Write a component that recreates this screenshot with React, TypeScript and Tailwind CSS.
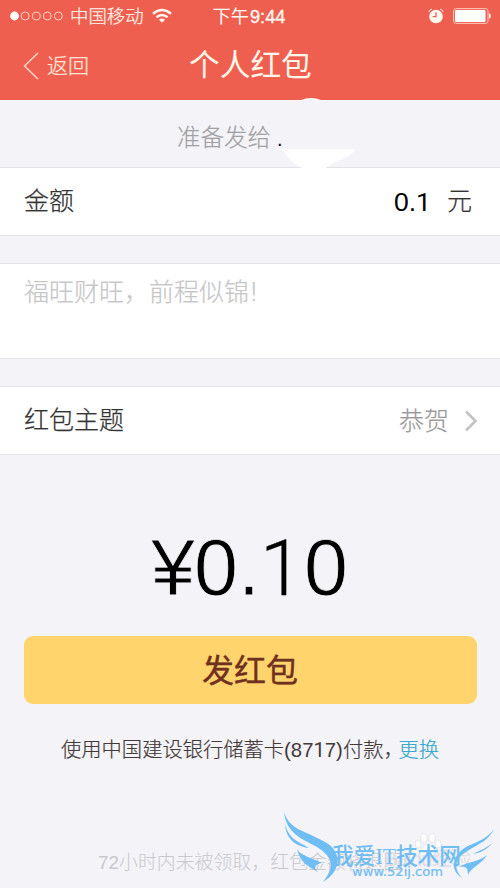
import type { ReactNode } from "react";

const cjk = "font-['Liberation_Sans','Noto_Sans_CJK_SC',sans-serif]";

function StatusBar() {
  return (
    <div className="flex h-8 items-center pl-[10px] pr-[9px] text-white">
      <svg width="54" height="12" viewBox="0 0 54 12" className="shrink-0">
        <circle cx="4.5" cy="6" r="4.4" fill="#fff" />
        {[15.2, 26.3, 37.3, 48.3].map((x) => (
          <circle key={x} cx={x} cy="6" r="4" fill="none" stroke="#ffd0c4" strokeWidth="1" />
        ))}
      </svg>
      <span className="ml-[6px] pt-px text-[18.4px] leading-8 font-light text-[#fff0e6] [-webkit-text-stroke:0.25px_#fff0e6]">中国移动</span>
      <svg width="20" height="16" viewBox="0 0 20 16" className="ml-2 shrink-0" fill="none" stroke="#fff8ee" strokeWidth="2.5">
        <path d="M1 5.8Q10-1.7 19 5.8" />
        <path d="M4.4 9.2Q10 4.7 15.6 9.2" />
        <path d="M7 11.7Q10 9.3 13 11.7L10 14.8Z" fill="#fff8ee" stroke="none" />
      </svg>
      <span className="ml-[41px] pt-px whitespace-nowrap text-[18.2px] leading-8 text-[#fff8f0]">
        下午<span className="ml-px [-webkit-text-stroke:0.35px_#fff8f0]">9:44</span>
      </span>
      <div className="ml-auto flex items-center gap-[9px]">
        <svg width="16" height="16" viewBox="0 0 16 16">
          <circle cx="8" cy="8.5" r="6.8" fill="#fff8f0" />
          <path d="M1 4Q1.5 1.5 4 1M12 1Q14.5 1.5 15 4" fill="none" stroke="#ffe5dc" strokeWidth="1.2" />
          <path d="M8 4.3V8.7H4.7" fill="none" stroke="#ef5f50" strokeWidth="1.3" />
        </svg>
        <svg width="38" height="16" viewBox="0 0 38 16">
          <rect x="0.6" y="0.6" width="34.4" height="14.8" rx="2.3" fill="none" stroke="#ffc9bd" />
          <rect x="2" y="2" width="30.5" height="12" rx="1" fill="#fff" />
          <path d="M36 5.2Q38 6 38 8T36 10.8Z" fill="#fff0e8" />
        </svg>
      </div>
    </div>
  );
}

function Row({ label, children }: { label: string; children: ReactNode }) {
  return (
    <div className="flex h-[69px] items-center justify-between border-y border-[#e3e2e5] bg-white pl-6 pt-px text-[25px] font-light text-[#333]">
      <span className="[-webkit-text-stroke:0.25px_#333]">{label}</span>
      {children}
    </div>
  );
}

function SiteMark() {
  return (
    <svg className="absolute left-[280px] top-[806px]" width="220" height="82" viewBox="280 806 220 82">
      <g fill="#fff" stroke="#dedde2" strokeWidth="0.7">
        <ellipse cx="418" cy="844" rx="3" ry="4" />
        <ellipse cx="424" cy="838" rx="3.2" ry="4.2" />
        <ellipse cx="432" cy="838" rx="3.2" ry="4.2" />
        <ellipse cx="438" cy="844" rx="3" ry="4" />
        <path d="M428 844C423 844 422 850 419 853C418 858 423 859 428 857C433 859 438 858 437 853C434 850 433 844 428 844Z" />
      </g>
      <text x="384" y="866" fontSize="20" textLength="87" fill="#dfdee3" fontFamily="Liberation Sans, Noto Sans CJK SC, sans-serif">Baidu经验</text>
      <g fill="#6fbef3">
        <path d="M284 812C290 830 302 829 325 842C342 851 342 871 323 882C335 867 333 857 317 847C302 839 286 833 284 812Z" />
        <path d="M285 824C289 839 297 841 309 848C300 847 286 842 285 824Z" />
        <path d="M297 849C302 857 311 857 322 863C315 864 313 867 318 872C307 866 300 862 297 849Z" />
        <path d="M494 829C489 840 479 844 469 850C453 859 454 869 462 878C448 869 454 854 466 847C479 841 488 838 494 829Z" />
        <path d="M492 843C487 850 480 853 473 854C481 850 487 848 492 843Z" />
        <path d="M487 855C481 865 471 867 468 875C468 868 466 866 459 867C469 861 479 862 487 855Z" />
      </g>
      <text x="332" y="864" fontSize="23" textLength="129" lengthAdjust="spacingAndGlyphs" fontWeight="500" fill="#6fbdf2" fontFamily="Liberation Serif, Noto Sans CJK SC, sans-serif">我爱IT技术网</text>
      <text x="352" y="876" fontSize="12.5" textLength="91" lengthAdjust="spacingAndGlyphs" fontWeight="400" fill="#6fbdf2" stroke="#6fbdf2" strokeWidth="0.2" fontFamily="DejaVu Sans, sans-serif">www.52ij.com</text>
    </svg>
  );
}

export default function App() {
  return (
    <div className={`relative flex h-[888px] w-[500px] flex-col overflow-hidden bg-[#f4f3f8] ${cjk}`}>
      <header className="h-[100px] shrink-0 bg-[#ef5f50]">
        <StatusBar />
        <div className="grid h-[67px] grid-cols-[189px_122px_1fr] items-center">
          <div className="flex items-center pl-[23px] text-[21px] font-light text-[#ffe5d8]">
            <svg width="16" height="28" viewBox="0 0 16 28" fill="none" stroke="#ffd6c8" strokeWidth="1.5">
              <path d="M15 1L1.5 14L15 27" />
            </svg>
            <span className="ml-[8px] pt-px [-webkit-text-stroke:0.25px_#ffe5d8]">返回</span>
          </div>
          <h1 className="whitespace-nowrap pt-px text-[30.7px] leading-[60px] font-normal text-[#fff5e9]">个人红包</h1>
        </div>
      </header>

      <main className="flex flex-col">
        <div className="flex h-[67px] items-center pl-[177px] pt-[10px] text-[23.5px] font-light whitespace-pre text-[#a0a0a3] [-webkit-text-stroke:0.2px_#a0a0a3]">
          准备发给<span className="ml-[6px] text-[20px] text-black">.</span>
        </div>
        <Row label="金额">
          <span className="flex items-center pr-7">
            <span className="text-[26.5px] font-normal text-black">
              0.<span className="font-['Roboto']">1</span>
            </span>
            <span className="ml-[16px] [-webkit-text-stroke:0.2px_#333]">元</span>
          </span>
        </Row>
        <div className="mt-[27px] h-[96px] border-y border-[#e3e2e5] bg-white pl-6 pt-[9px] text-[25px] leading-[38px] font-light text-[#c6c6c8] [-webkit-text-stroke:0.2px_#c6c6c8]">
          福旺财旺，前程似锦<span className="ml-[2px] font-['Roboto']">!</span>
        </div>
        <div className="mt-[27px]">
          <Row label="红包主题">
            <span className="flex items-center pr-[22px] text-[#999]">
              <span className="pt-px [-webkit-text-stroke:0.2px_#999]">恭贺</span>
              <svg className="ml-[15px]" width="14" height="22" viewBox="0 0 14 22" fill="none" stroke="#c3c3c5" strokeWidth="2.6">
                <path d="M2 1.5L11.5 11L2 20.5" />
              </svg>
            </span>
          </Row>
        </div>
        <div className="mt-[67px] flex h-[91px] items-baseline pl-[151px] text-[79px] leading-[91px] text-black [-webkit-text-stroke:0.8px_#f4f3f8]">
          <span className="w-[43px]">¥</span>
          <span className="w-[44px]">0</span>
          <span className="w-[22px]">.</span>
          <span className="w-[44px] font-['Roboto'] text-[77px] font-light [-webkit-text-stroke:0.3px_#000]">1</span>
          <span>0</span>
        </div>
        <button className="mx-[23.5px] mt-[23px] h-[68px] rounded-[9px] bg-[#ffd46c] pt-[2px] text-[32px] font-normal text-[#703020] [-webkit-text-stroke:0.4px_#703020]">发红包</button>
        <p className="mt-[30px] flex h-[32px] whitespace-nowrap pl-[61px] text-[20.3px] leading-[33px] font-light text-[#433a38] [-webkit-text-stroke:0.2px_#433a38]">
          使用中国建设银行储蓄卡
          <span className="[-webkit-text-stroke:0px]">
            (87<span className="font-['Roboto'] font-normal">1</span>7)
          </span>
          付款<span className="w-[15px]">，</span>
          <span className="text-[#3aa9cd] [-webkit-text-stroke:0.2px_#3aa9cd]">更换</span>
        </p>
        <p className="mt-[83px] whitespace-nowrap pl-[98px] text-[18.9px] leading-[28px] font-light text-[#c9c8cc]">
          72小时内未被领取，红包金额将退回
        </p>
      </main>

      <svg className="absolute left-[280px] top-[97px]" width="78" height="71" viewBox="280 97 78 71">
        <path d="M301 100Q311 96 321 100Z" fill="#fff" />
        <path d="M282 149H355Q353 155 341 160Q333 162 326 168H302Q291 164 282 149Z" fill="#fff" />
      </svg>
      <SiteMark />
    </div>
  );
}
